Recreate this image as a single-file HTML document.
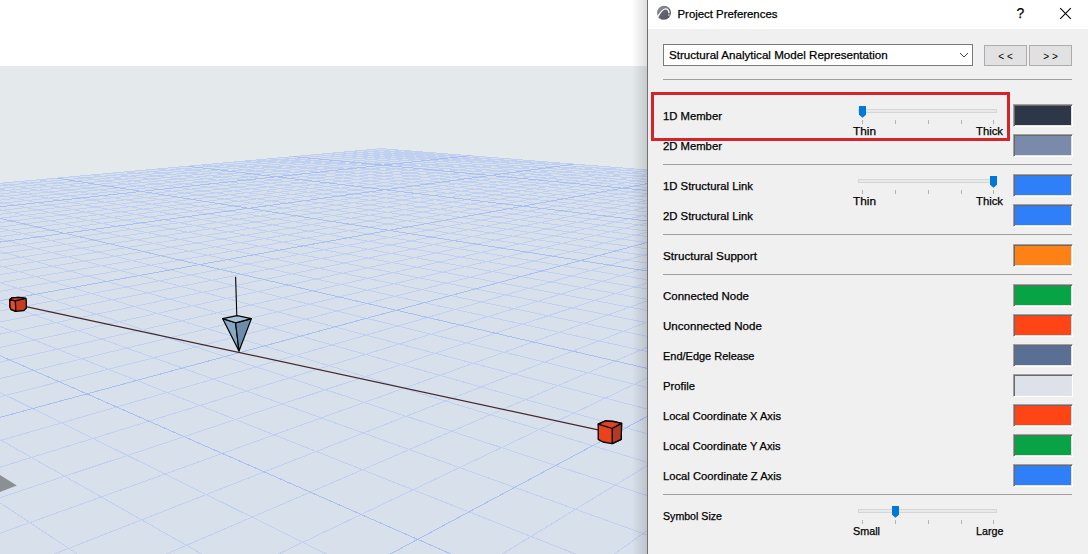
<!DOCTYPE html>
<html><head><meta charset="utf-8"><style>
html,body{margin:0;padding:0;width:1088px;height:554px;overflow:hidden;background:#fff}
body{position:relative;font-family:"Liberation Sans",sans-serif;color:#000}
.t{position:absolute;white-space:nowrap;line-height:14px;color:#000;-webkit-text-stroke:0.25px #000}
#view{position:absolute;left:0;top:66px;width:647px;height:488px;background:#e4e9eb;overflow:hidden}
#shadow{position:absolute;left:632px;top:0;width:15px;height:554px;background:linear-gradient(to right,rgba(0,0,0,0),rgba(0,0,0,0.13))}
#panel{position:absolute;left:647px;top:0;width:441px;height:554px;background:#f0f0f0;border-left:1px solid #707070;box-sizing:border-box}
#title{position:absolute;left:648px;top:0;width:440px;height:29px;background:#fff}
#dd{position:absolute;left:663px;top:44px;width:310px;height:22px;box-sizing:border-box;border:1px solid #7a7a7a;background:#fff}
.btn{position:absolute;top:45px;width:43px;height:21px;box-sizing:border-box;border:1px solid #adadad;background:#e1e1e1;font-size:10px;text-align:center;line-height:21px}
.sep{position:absolute;left:663px;width:409px;height:1px;background:#a0a0a0}
.sw{position:absolute;left:1013px;width:60px;height:23px;box-sizing:border-box;border-top:1px solid #a0a0a0;border-left:1px solid #a0a0a0;border-right:1px solid #fff;border-bottom:1px solid #fff;box-shadow:inset 1px 1px 0 #696969, inset -1px -1px 0 #e3e3e3}
.track{position:absolute;left:858px;width:139px;height:4px;box-sizing:border-box;border:1px solid #d6d6d6;background:#e7eaea}
.tick{position:absolute;width:1px;height:4px;background:#b4b4b4}
.thumb{position:absolute}
#redbox{position:absolute;left:651px;top:92px;width:359px;height:49px;box-sizing:border-box;border:3px solid #d4242a}
</style></head><body>
<div id="view"><svg width="647" height="488" viewBox="0 0 647 488" style="position:absolute;left:0;top:0">
<path d="M381.38 82.65L-1335.73 238.45L-1335.73 600L1974.48 600L1974.48 210.38Z" fill="#d8e0eb"/>
<path d="M381.38 82.65L-63.33 123.00M391.64 83.48L-54.57 124.82M402.10 84.32L-68.25 128.84M412.78 85.17L-59.15 130.83M423.67 86.05L-73.66 135.25M434.79 86.94L-64.18 137.45M446.14 87.85L-54.40 139.72M457.72 88.78L-69.75 144.77M481.63 90.69L-75.95 152.90M493.98 91.68L-65.26 155.71M506.59 92.69L-54.18 158.62M519.48 93.73L-71.68 165.15M532.66 94.78L-60.04 168.43M546.14 95.86L-78.91 175.80M559.92 96.97L-66.67 179.52M588.46 99.26L-74.23 192.16M603.23 100.44L-60.72 196.61M618.36 101.65L-82.92 206.71M633.85 102.90L-68.58 211.86M649.73 104.17L-53.52 217.27M666.00 105.47L-77.77 229.67M682.67 106.81L-61.66 236.04M717.32 109.59L-71.33 258.33M735.32 111.03L-52.96 266.41M753.80 112.51L-83.01 285.25M772.77 114.03L-63.07 295.13M792.26 115.60L-97.40 318.41M812.28 117.20L-75.61 330.76M832.87 118.85L-52.07 344.10M875.82 122.30L-65.41 393.47M898.23 124.09L-112.63 435.89M921.31 125.94L-83.21 459.33M945.08 127.85L-50.46 485.43M969.57 129.81L-108.15 551.60M994.83 131.84L-70.10 589.64M1020.87 133.93L-26.41 633.30M1075.51 138.31L281.07 622.95M1104.18 140.61L431.09 617.90M1133.81 142.98L578.71 612.93M1164.46 145.44L723.97 608.04M1196.17 147.98L866.95 603.23M381.38 82.65L717.32 109.59M371.26 83.57L708.78 111.20M360.93 84.51L700.00 112.85M350.36 85.47L709.41 116.14M339.55 86.45L700.25 117.94M328.50 87.45L710.10 121.53M317.19 88.48L700.52 123.51M305.61 89.53L710.85 127.45M281.62 91.71L711.69 133.96M269.19 92.83L701.14 136.37M256.45 93.99L712.60 141.18M243.40 95.17L701.50 143.85M230.01 96.39L713.63 149.20M216.29 97.63L701.90 152.19M202.21 98.91L714.77 158.19M172.92 101.57L716.06 168.32M157.68 102.95L702.87 172.12M142.03 104.37L717.53 179.83M125.95 105.83L703.45 184.17M109.41 107.33L719.21 193.02M92.40 108.87L704.12 198.02M74.90 110.46L721.15 208.28M38.35 113.78L723.43 226.14M19.24 115.51L705.82 233.04M-0.45 117.30L726.13 247.35M-20.76 119.14L706.91 255.61M-41.71 121.04L729.39 272.91M-63.33 123.00L708.24 283.00M-85.66 125.03L733.39 304.35M-132.57 129.29L738.44 343.94M-157.24 131.52L711.97 360.08M-182.77 133.84L744.99 395.32M-209.21 136.24L714.71 416.78M-236.60 138.72L753.82 464.68M-265.00 141.30L718.48 494.60M-294.47 143.97L766.41 563.48M-356.87 149.64L578.71 612.93M-389.93 152.64L431.09 617.90M-424.33 155.76L281.07 622.95M-460.16 159.01L128.59 628.09M-497.51 162.40L-26.41 633.30M-536.47 165.93L-184.01 638.61M-577.15 169.62L-344.25 644.00" stroke="#c0d0f0" stroke-width="1" fill="none" shape-rendering="crispEdges"/>
<path d="M469.55 89.72L-59.54 147.28M574.02 98.10L-53.90 183.40M699.77 108.18L-88.63 250.72M854.04 120.55L-91.59 376.13M1047.76 136.08L128.59 628.09M293.76 90.60L700.81 129.62M187.75 100.22L702.36 161.55M56.89 112.09L704.90 214.12M-108.73 127.12L709.88 316.94M-325.07 146.75L723.97 608.04" stroke="#a8c0f0" stroke-width="1" fill="none" shape-rendering="crispEdges"/>
<g transform="translate(0,-66)">
<path d="M0 475L16.8 485.4L0 492Z" fill="#8b9095"/>
<line x1="20" y1="305.3" x2="605" y2="431.3" stroke="#452830" stroke-width="1.25"/>
<!-- cube 1 -->
<g stroke="#000" stroke-width="1.3" stroke-linejoin="round">
<path d="M9.8 299.8L12 297.8L18.5 297.3L25.8 298.3L26.3 300.3L26.3 308.3L23.8 310.5L15.8 311.3L11 309.3L10 307.3Z" fill="#c43c22"/>
<path d="M9.8 299.8L12 297.8L18.5 297.3L25.8 298.3L15.3 300.8Z" fill="#d84424"/>
<path d="M9.8 299.8L15.3 300.8L15.8 311.3L11 309.3L10 307.3Z" fill="#ee4a24"/>
</g>
<!-- cube 2 -->
<g stroke="#000" stroke-width="1.3" stroke-linejoin="round">
<path d="M598.2 424.2L605.5 420.8L613.5 421.5L621.6 423.4L621.2 439.3L612.2 443.6L603 442L598.2 439.4Z" fill="#e8421e"/>
<path d="M598.2 424.2L605.5 420.8L613.5 421.5L621.6 423.4L612.2 428.5Z" fill="#d84424"/>
<path d="M612.2 428.5L621.6 423.4L621.2 439.3L612.2 443.6Z" fill="#b23a22"/>
</g>
<!-- support -->
<line x1="235.6" y1="276.8" x2="236.8" y2="316" stroke="#000" stroke-width="1.1"/>
<g stroke="#000" stroke-width="1.2" stroke-linejoin="round">
<path d="M222.6 318.6L235.6 322.8L239 351L222.6 318.6Z" fill="#86a8c4"/>
<path d="M235.6 322.8L251.4 318.6L239 351Z" fill="#6c8daa"/>
<path d="M222.6 318.6L237 315.7L251.4 318.6L235.6 322.8Z" fill="#a8c2d6"/>
</g>
</g>
</svg></div>
<div id="shadow"></div>
<div id="panel"></div>
<div id="title"></div>
<div class="t" style="left:677.5px;top:6.84px;font-size:11.39px">Project Preferences</div>
<svg style="position:absolute;left:656px;top:5px" width="16" height="16" viewBox="0 0 16 16"><defs><linearGradient id="lg" x1="0" y1="0" x2="1" y2="1"><stop offset="0" stop-color="#9898a6"/><stop offset="1" stop-color="#4a4a54"/></linearGradient></defs><circle cx="8" cy="7.8" r="7" fill="url(#lg)"/><path d="M8 7.8 m-6 5 C3 9 6 4.5 9.5 4.2 C12 4 13 6 13 8.5 L13 10 L6 15 Z" fill="#5a5a66" opacity="0.6"/><path d="M1.3 12.8 C3.5 8.5 6.5 4 9.5 3.9 C11.8 3.8 13 5.6 13 8.3" stroke="#fff" stroke-width="1.3" fill="none"/><rect x="12.2" y="9.4" width="1.4" height="1.4" fill="#ddd"/></svg>
<div class="t" style="left:1016.5px;top:5px;font-size:14px;line-height:16px">?</div>
<svg style="position:absolute;left:1059px;top:7px" width="13" height="13" viewBox="0 0 13 13"><path d="M1.2 1.2L11.8 11.8M11.8 1.2L1.2 11.8" stroke="#000" stroke-width="1.1"/></svg>
<div id="dd"></div>
<div class="t" style="left:669px;top:48.16px;font-size:11.62px">Structural Analytical Model Representation</div>
<svg style="position:absolute;left:959px;top:52px" width="10" height="7" viewBox="0 0 10 7"><path d="M1 1L5 5L9 1" stroke="#444" stroke-width="1" fill="none"/></svg>
<div class="btn" style="left:984px"><span>&lt; &lt;</span></div>
<div class="btn" style="left:1029px"><span>&gt; &gt;</span></div>
<div class="sep" style="top:79px"></div>
<div class="sep" style="top:164px"></div>
<div class="sep" style="top:234px"></div>
<div class="sep" style="top:274px"></div>
<div class="sep" style="top:494px"></div>
<div class="t" style="left:663px;top:109.27px;font-size:11.29px">1D Member</div>
<div class="sw" style="top:104px;background:#2d3748"></div>
<div class="t" style="left:663px;top:139.27px;font-size:11.29px">2D Member</div>
<div class="sw" style="top:134px;background:#7a8aab"></div>
<div class="t" style="left:663px;top:179.26px;font-size:11.32px">1D Structural Link</div>
<div class="sw" style="top:174px;background:#2f7ff8"></div>
<div class="t" style="left:663px;top:209.26px;font-size:11.32px">2D Structural Link</div>
<div class="sw" style="top:204px;background:#2f7ff8"></div>
<div class="t" style="left:663px;top:249.15px;font-size:11.66px">Structural Support</div>
<div class="sw" style="top:244px;background:#fd8115"></div>
<div class="t" style="left:663px;top:289.21px;font-size:11.46px">Connected Node</div>
<div class="sw" style="top:284px;background:#07a345"></div>
<div class="t" style="left:663px;top:319.18px;font-size:11.56px">Unconnected Node</div>
<div class="sw" style="top:314px;background:#ff4416"></div>
<div class="t" style="left:663px;top:349.37px;font-size:10.97px">End/Edge Release</div>
<div class="sw" style="top:344px;background:#5a6f94"></div>
<div class="t" style="left:663px;top:379.27px;font-size:11.29px">Profile</div>
<div class="sw" style="top:374px;background:#dde2ea"></div>
<div class="t" style="left:663px;top:409.33px;font-size:11.11px">Local Coordinate X Axis</div>
<div class="sw" style="top:404px;background:#ff4416"></div>
<div class="t" style="left:663px;top:439.33px;font-size:11.11px">Local Coordinate Y Axis</div>
<div class="sw" style="top:434px;background:#07a345"></div>
<div class="t" style="left:663px;top:469.30px;font-size:11.21px">Local Coordinate Z Axis</div>
<div class="sw" style="top:464px;background:#2f7ff8"></div>
<div class="track" style="top:109px"></div>
<div class="tick" style="left:862px;top:120px"></div>
<div class="tick" style="left:895px;top:120px"></div>
<div class="tick" style="left:928px;top:120px"></div>
<div class="tick" style="left:961px;top:120px"></div>
<div class="tick" style="left:993px;top:120px"></div>
<svg class="thumb" style="left:859px;top:106px" width="7" height="12" viewBox="0 0 7 12"><path d="M0 0H7V8.7L3.5 11.8L0 8.7Z" fill="#0078d7"/></svg>
<div class="t" style="left:853px;top:124.09px;font-size:11.82px">Thin</div>
<div class="t" style="left:976px;top:124.27px;font-size:11.3px">Thick</div>
<div class="track" style="top:179px"></div>
<div class="tick" style="left:862px;top:190px"></div>
<div class="tick" style="left:895px;top:190px"></div>
<div class="tick" style="left:928px;top:190px"></div>
<div class="tick" style="left:961px;top:190px"></div>
<div class="tick" style="left:993px;top:190px"></div>
<svg class="thumb" style="left:990px;top:176px" width="7" height="12" viewBox="0 0 7 12"><path d="M0 0H7V8.7L3.5 11.8L0 8.7Z" fill="#0078d7"/></svg>
<div class="t" style="left:853px;top:194.09px;font-size:11.82px">Thin</div>
<div class="t" style="left:976px;top:194.27px;font-size:11.3px">Thick</div>
<div class="t" style="left:663px;top:509.49px;font-size:10.62px">Symbol Size</div>
<div class="track" style="top:509px"></div>
<div class="tick" style="left:862px;top:520px"></div>
<div class="tick" style="left:895px;top:520px"></div>
<div class="tick" style="left:928px;top:520px"></div>
<div class="tick" style="left:961px;top:520px"></div>
<div class="tick" style="left:993px;top:520px"></div>
<svg class="thumb" style="left:892px;top:506px" width="7" height="12" viewBox="0 0 7 12"><path d="M0 0H7V8.7L3.5 11.8L0 8.7Z" fill="#0078d7"/></svg>
<div class="t" style="left:853px;top:524.43px;font-size:10.8px">Small</div>
<div class="t" style="left:976px;top:524.46px;font-size:10.7px">Large</div>
<div id="redbox"></div>
</body></html>
